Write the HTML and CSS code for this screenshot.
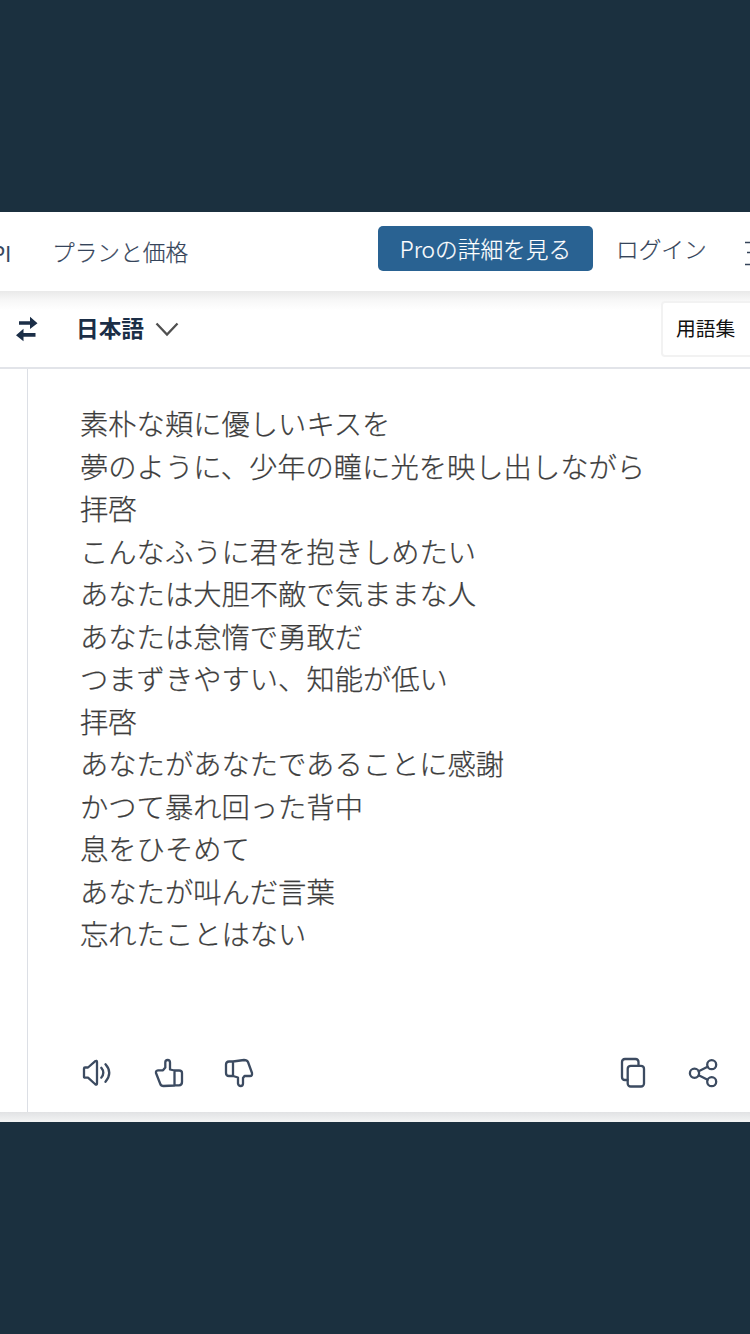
FILE: index.html
```html
<!DOCTYPE html>
<html lang="ja">
<head>
<meta charset="utf-8">
<title>翻訳</title>
<link rel="stylesheet" href="styles.css">
</head>
<body>
<main class="app">
  <header class="header">
    <span class="nav-api">PI</span>
    <a class="nav-plans">プランと価格</a>
    <a class="pro">Proの詳細を見る</a>
    <a class="login">ログイン</a>
    <svg class="menu" width="24" height="30" viewBox="0 0 24 30"><path d="M1 3.500H24M3 13.500H24M1 25.500H24" fill="none" stroke="#35445a" stroke-width="1.700"/></svg>
  </header>
  <section class="langbar">
    <svg class="swap" width="22" height="26" viewBox="0 0 22 26"><path d="M3 5.300H14V.8L21.500 7.200L14 13V8.800H3ZM19.500 17H7.500V12.800L0 19.200L7.500 25.200V20.800H19.500Z" fill="#1b2e47"/></svg>
    <span class="lang">日本語</span>
    <svg class="chevron" width="24" height="15" viewBox="0 0 24 15"><path d="M1.500 1.500L12 12.500L22.500 1.500" fill="none" stroke="#505050" stroke-width="2.300"/></svg>
    <button class="glossary">用語集</button>
  </section>
  <section class="content">
    <div class="source"></div>
    <div class="target">
      <div class="lines">
        <p>素朴な頬に優しいキスを</p>
        <p>夢のように、少年の瞳に光を映し出しながら</p>
        <p>拝啓</p>
        <p>こんなふうに君を抱きしめたい</p>
        <p>あなたは大胆不敵で気ままな人</p>
        <p>あなたは怠惰で勇敢だ</p>
        <p>つまずきやすい、知能が低い</p>
        <p>拝啓</p>
        <p>あなたがあなたであることに感謝</p>
        <p>かつて暴れ回った背中</p>
        <p>息をひそめて</p>
        <p>あなたが叫んだ言葉</p>
        <p>忘れたことはない</p>
      </div>
      <div class="tools">
        <svg class="icon speaker" width="30" height="30" viewBox="0 0 30 30"><path d="M2 10.500Q2 9.500 3 9.500H6L13 3.300Q15 2 15 4V25.500Q15 27.500 13 26L6 19.700H3Q2 19.700 2 18.700ZM19.300 9.800Q23.300 14.600 19.300 19.600M23.500 6.300Q31 14.700 23.500 23.800"/></svg>
        <svg class="icon thumb-up" width="30" height="30" viewBox="0 0 30 30"><path d="M20.500 12.500L16 11.500V4.500Q16 2 13.700 2Q11.300 2 11.300 4.500V9.500L9 12.300H4Q1.500 12.500 2 15L6.300 26Q7 28 9.500 28L20.500 27.500M20.500 12.500H25Q28 12.500 28 15V24Q28 27.300 25 27.300H20.500Z"/></svg>
        <svg class="icon thumb-down" width="30" height="30" viewBox="0 0 30 30"><path d="M9 3.500H5Q2 3.500 2 6.500V15Q2 18 5 18H9ZM9 3.500L20 2Q23 2 24 4L28 15Q28.500 18 26 18H20.500L19 20V25.500Q19 28 16.700 28Q14.500 28 14 25.500V19.500L9 18"/></svg>
        <svg class="icon copy" width="26" height="32" viewBox="0 0 26 32"><path d="M18.500 8.500V5Q18.500 2 15.500 2H5Q2 2 2 5V20Q2 23 5 23H7.500"/><rect x="7.700" y="8.800" width="16.300" height="20.700" rx="3"/></svg>
        <svg class="icon share" width="30" height="30" viewBox="0 0 30 30"><circle cx="6.500" cy="15.300" r="4.600"/><circle cx="23.700" cy="6.700" r="4.500"/><circle cx="23.700" cy="23.700" r="4.500"/><path d="M10.700 13.200L19.600 8.800M10.700 17.300L19.600 21.700"/></svg>
      </div>
    </div>
  </section>
  <div class="shade"></div>
</main>
</body>
</html>
```
FILE: styles.css
```css
* { box-sizing: border-box; }

body {
  margin: 0;
  height: 1334px;
  padding: 212px 0;
  overflow: hidden;
  background: #1b303f;
  font-family: "Noto Sans CJK JP", sans-serif;
}

.app {
  width: 750px;
  height: 910px;
  overflow: hidden;
  background: #fff;
}

.header {
  display: flex;
  align-items: flex-start;
  height: 79px;
  color: #35445a;
  font-size: 22.7px;
  font-weight: 300;
  line-height: 34px;
  white-space: nowrap;
  -webkit-text-stroke: 0.2px;
}

.header > * { flex: none; }

.nav-api {
  display: flex;
  justify-content: flex-end;
  width: 11px;
  margin: 25px 41px 0 0;
  font-family: "Open Sans", sans-serif;
  font-size: 21px;
  font-weight: 400;
}

.nav-plans {
  width: 138px;
  margin-top: 23px;
}

.pro {
  width: 215px;
  height: 45px;
  margin: 14px 23px 0 188px;
  border-radius: 5px;
  background: #296292;
  color: #fff;
  line-height: 45px;
  text-align: center;
}

.login {
  width: 91px;
  margin-top: 20px;
}

.menu {
  margin: 27px 0 0 37px;
}

.langbar {
  display: flex;
  align-items: center;
  height: 78px;
  padding-left: 16px;
  border-bottom: 2px solid #e2e4e9;
  background: linear-gradient(#e9e9e9, #f7f7f7 9px, #fff 19px);
}

.langbar > * { flex: none; }

.swap {
  margin-right: 38px;
}

.lang {
  width: 69px;
  color: #1b2e47;
  font-size: 22.7px;
  font-weight: 700;
  line-height: 34px;
  padding-bottom: 2px;
}

.chevron {
  margin-left: 10px;
}

.glossary {
  width: 100px;
  height: 56px;
  margin-left: 482px;
  padding: 0 0 3px 13px;
  border: 2px solid #f2f2f2;
  border-radius: 4px;
  background: #fff;
  color: #111;
  font-family: inherit;
  font-size: 19.8px;
  text-align: left;
}

.content {
  display: flex;
  height: 743px;
}

.source {
  width: 28px;
  border-right: 1.5px solid #dcdfe5;
}

.target {
  display: flex;
  flex: 1;
  flex-direction: column;
  padding: 33px 32px 23px 52px;
}

.lines {
  color: #3c3c3c;
  font-size: 28.3px;
  font-weight: 300;
  line-height: 42.5px;
  white-space: nowrap;
  -webkit-text-stroke: 0.25px;
}

.lines p { margin: 0; }

.tools {
  display: flex;
  align-items: center;
  margin-top: auto;
  padding-left: 2px;
}

.icon {
  flex: none;
  fill: none;
  stroke: #3c4b61;
  stroke-width: 2.3;
  stroke-linecap: round;
  stroke-linejoin: round;
}

.thumb-up { margin-left: 42px; }
.thumb-down { margin-left: 40px; }
.copy { margin-left: auto; }
.share { margin-left: 42px; }

.shade {
  height: 10px;
  background: linear-gradient(#e1e2e4, #f3f4f4);
}
```
